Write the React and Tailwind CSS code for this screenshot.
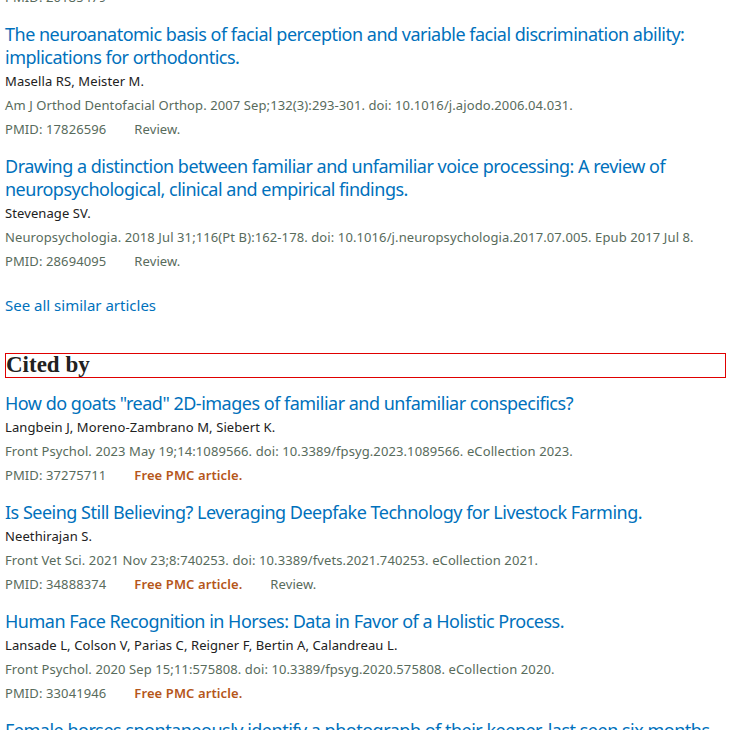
import React from "react";

const similar = [
  {
    title:
      "The neuroanatomic basis of facial perception and variable facial discrimination ability: implications for orthodontics.",
    authors: "Masella RS, Meister M.",
    journal:
      "Am J Orthod Dentofacial Orthop. 2007 Sep;132(3):293-301. doi: 10.1016/j.ajodo.2006.04.031.",
    pmid: "17826596",
    review: true,
  },
  {
    title:
      "Drawing a distinction between familiar and unfamiliar voice processing: A review of neuropsychological, clinical and empirical findings.",
    authors: "Stevenage SV.",
    journal:
      "Neuropsychologia. 2018 Jul 31;116(Pt B):162-178. doi: 10.1016/j.neuropsychologia.2017.07.005. Epub 2017 Jul 8.",
    pmid: "28694095",
    review: true,
  },
];

const citedBy = [
  {
    title: 'How do goats "read" 2D-images of familiar and unfamiliar conspecifics?',
    authors: "Langbein J, Moreno-Zambrano M, Siebert K.",
    journal:
      "Front Psychol. 2023 May 19;14:1089566. doi: 10.3389/fpsyg.2023.1089566. eCollection 2023.",
    pmid: "37275711",
    free: true,
  },
  {
    title: "Is Seeing Still Believing? Leveraging Deepfake Technology for Livestock Farming.",
    authors: "Neethirajan S.",
    journal:
      "Front Vet Sci. 2021 Nov 23;8:740253. doi: 10.3389/fvets.2021.740253. eCollection 2021.",
    pmid: "34888374",
    free: true,
    review: true,
  },
  {
    title: "Human Face Recognition in Horses: Data in Favor of a Holistic Process.",
    authors: "Lansade L, Colson V, Parias C, Reigner F, Bertin A, Calandreau L.",
    journal:
      "Front Psychol. 2020 Sep 15;11:575808. doi: 10.3389/fpsyg.2020.575808. eCollection 2020.",
    pmid: "33041946",
    free: true,
  },
  {
    title:
      "Female horses spontaneously identify a photograph of their keeper, last seen six months previously.",
    authors: "Lansade L, Colson V, Parias C, Trösch M, Reigner F, Calandreau L.",
    journal: "Sci Rep. 2020 Apr 14;10(1):6302. doi: 10.1038/s41598-020-62940-w.",
    pmid: "32286340",
    free: true,
  },
];

function Article({ a }) {
  return (
    <div className="mt-[14px]">
      <a className="block text-[18px] leading-[23px] text-[#0071bc] tracking-[-0.5px]">{a.title}</a>
      <div className="text-[13px] leading-[24px] text-[#212121] tracking-[0.1px]">{a.authors}</div>
      <div className="text-[13px] leading-[24px] text-[#586b5c] tracking-[0.1px]">{a.journal}</div>
      <div className="flex gap-[28px] text-[13px] leading-[24px] text-[#586b5c] tracking-[0.1px]">
        <span>PMID: {a.pmid}</span>
        {a.free && <span className="font-semibold text-[#b5561a]">Free PMC article.</span>}
        {a.review && <span>Review.</span>}
      </div>
    </div>
  );
}

export default function App() {
  return (
    <div
      className="w-[730px] h-[730px] overflow-hidden bg-white"
      style={{ fontFamily: '"Noto Sans", "Open Sans", sans-serif' }}
    >
      <div className="mt-[-15px] pl-[5px] w-[726px]">
        <div className="text-[13px] leading-[24px] text-[#586b5c] tracking-[0.1px]">PMID: 20185479</div>
        {similar.map((a) => (
          <Article key={a.pmid} a={a} />
        ))}
        <a className="block mt-[21px] text-[15px] leading-[22px] text-[#0071bc]">See all similar articles</a>

        <h2
          className="mt-[37px] border border-[#e00000] h-[25px] text-[23px] leading-[22px] font-bold text-[#212121]"
          style={{ fontFamily: '"Liberation Serif", serif' }}
        >
          Cited by
        </h2>
        {citedBy.map((a) => (
          <Article key={a.pmid} a={a} />
        ))}
      </div>
    </div>
  );
}
